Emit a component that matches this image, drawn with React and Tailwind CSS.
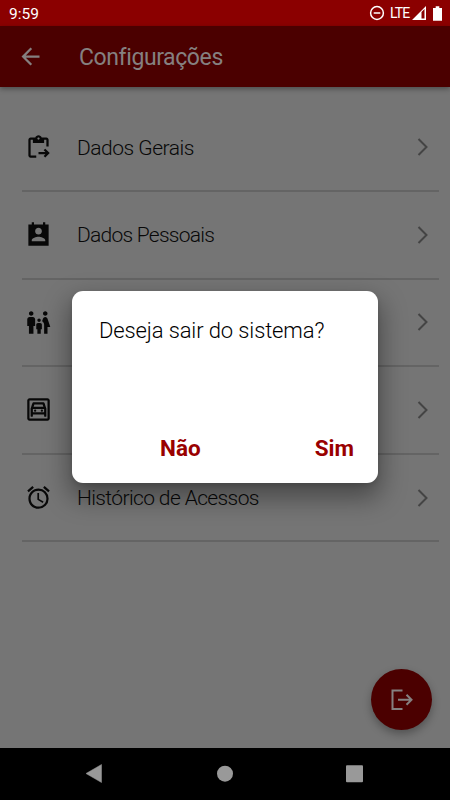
import React from "react";
import {
  MdContentPasteGo,
  MdFamilyRestroom,
  MdOutlineGarage,
  MdAccessAlarm,
  MdArrowBack,
} from "react-icons/md";

function ContactIcon() {
  return (
    <svg viewBox="0 0 24 24" className="size-[27px]" fill="currentColor">
      <path d="M21 3h-3V1h-2v2H8V1H6v2H3v19h18V3zm-9 3c1.660 0 3 1.340 3 3s-1.340 3-3 3-3-1.340-3-3 1.340-3 3-3zm6 12H6v-1c0-2 4-3.100 6-3.100s6 1.100 6 3.100v1z" />
    </svg>
  );
}

const items = [
  { id: "general", label: "Dados Gerais", icon: <MdContentPasteGo size={27} />, tracking: "tracking-[-0.48px]" },
  { id: "personal", label: "Dados Pessoais", icon: <ContactIcon />, tracking: "tracking-[-0.74px]" },
  { id: "family", label: "", icon: <MdFamilyRestroom size={27} />, tracking: "tracking-normal" },
  { id: "garage", label: "", icon: <MdOutlineGarage size={27} />, tracking: "tracking-normal" },
  { id: "history", label: "Histórico de Acessos", icon: <MdAccessAlarm size={27} />, tracking: "tracking-[-0.62px]" },
];

function StatusBar() {
  return (
    <div className="flex h-[26px] items-center bg-[#8b0000] pl-[9px] pr-[8px] text-white">
      <span className="pt-px text-[15.500px] leading-[26px]">9:59</span>
      <svg viewBox="0 0 16 16" className="ml-auto size-[16px]" fill="none" stroke="currentColor" strokeWidth="1.5">
        <circle cx="8" cy="8" r="6.4" />
        <path d="M4.700 8h6.600" />
      </svg>
      <span className="ml-[5px] w-[19px] text-[14px] leading-[26px] tracking-[-0.9px]">LTE</span>
      <svg viewBox="0 0 14 14" className="ml-[3px] size-[14px]">
        <path fill="white" fillRule="evenodd" d="M0 14L14 0v14zM9.500 6v6.600h3V3z" />
      </svg>
      <svg viewBox="0 0 10 16" className="ml-[7px] h-[15px] w-[9px]" fill="white">
        <path d="M3 0h4v2h3v14H0V2h3z" />
      </svg>
    </div>
  );
}

export default function App() {
  return (
    <div className="relative flex h-[800px] w-[450px] flex-col overflow-hidden bg-[#757575] font-['Roboto',sans-serif]">
      <StatusBar />
      <header className="z-10 flex h-[61px] items-center bg-[#4b0000] pl-[17px] text-[#858080] shadow-[0_2px_5px_rgba(0,0,0,0.35)]">
        <MdArrowBack size={27} />
        <h1 className="ml-[35px] pt-[2px] text-[23px] leading-[30px] tracking-[-0.4px]">Configurações</h1>
      </header>
      <main className="flex flex-1 flex-col pl-[22px] pr-[11px] pt-[17.400px]">
        {items.map((item) => (
          <div
            key={item.id}
            className="flex h-[87.600px] items-center border-b-2 border-[#646464] text-[#080808]"
          >
            <div className="flex w-[33px] justify-center">{item.icon}</div>
            <span className={`ml-[22px] flex-1 whitespace-nowrap pt-px text-[21px] font-light leading-[28px] ${item.tracking}`}>
              {item.label}
            </span>
            <svg viewBox="0 0 12 18" className="mr-[10px] h-[18px] w-[12px]" fill="none" stroke="#444" strokeWidth="2">
              <path d="M1.500 1l8 8-8 8" />
            </svg>
          </div>
        ))}
        <button className="mb-[18px] mr-[7px] mt-auto flex size-[61px] items-center justify-center self-end rounded-full bg-[#4b0000] shadow-[0_4px_8px_rgba(0,0,0,0.3)]">
          <svg viewBox="0 0 24 22" className="h-[22px] w-[24px]" fill="none" stroke="#858080" strokeWidth="2">
            <path d="M12.500 1.500H2.500v18.500h10M8 10.700h13.500M16.500 5.700l5 5-5 5" />
          </svg>
        </button>
      </main>
      <nav className="flex h-[52px] items-center bg-black">
        <svg viewBox="0 1 450 52" className="h-[52px] w-[450px]" fill="#999">
          <path d="M86 26.500l15.500-9v18z" stroke="#999" strokeLinejoin="round" strokeWidth=".5" />
          <circle cx="225" cy="26.700" r="8" />
          <rect x="346" y="18.200" width="17" height="17" rx="1" />
        </svg>
      </nav>
      <div role="dialog" className="absolute left-[72px] top-[291px] z-20 flex h-[191.500px] w-[306px] flex-col justify-between rounded-[11px] bg-white pb-[20px] pl-[27px] pr-[24px] pt-[25px] shadow-[0_12px_26px_3px_rgba(0,0,0,0.38),0_2px_5px_rgba(0,0,0,0.1)]">
        <p className="whitespace-nowrap text-[22px] font-light leading-[30px] tracking-[-0.12px] text-black">Deseja sair do sistema?</p>
        <div className="flex justify-between pl-[61px] text-[22.500px] font-bold leading-[30px] text-[#990000]">
          <button>Não</button>
          <button>Sim</button>
        </div>
      </div>
    </div>
  );
}
